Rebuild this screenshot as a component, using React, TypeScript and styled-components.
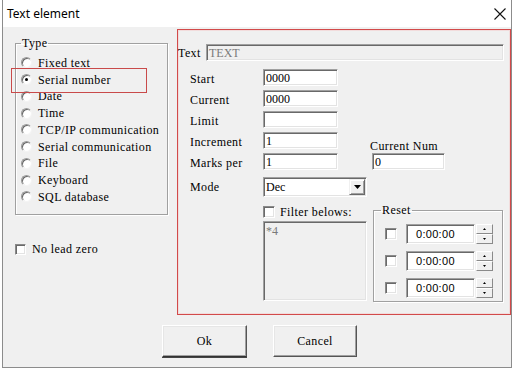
import React from "react"
import styled, { createGlobalStyle } from "styled-components"

const GlobalStyle = createGlobalStyle`
  html, body { margin: 0; padding: 0; background: #fff; }
  body { font-family: "Liberation Serif", serif; color: #000; }
  * { box-sizing: border-box; }
`

const dlgText = `
  font-family: "Liberation Serif", serif;
  font-size: 12px;
  letter-spacing: 0.4px;
  line-height: 12px;
  white-space: nowrap;
`

const Window = styled.div`
  box-sizing: content-box;
  margin-left: 2px;
  width: 508px;
  height: 367px;
  border: 1px solid #8c8c8c;
  border-top: none;
  background: #f0f0f0;
  display: flex;
  flex-direction: column;
`

const TitleBar = styled.div`
  height: 27px;
  flex: 0 0 27px;
  background: #fff;
  display: flex;
  align-items: center;
  justify-content: space-between;
  padding: 0 5px 0 4px;
`

const Title = styled.span`
  font-family: "Noto Sans", sans-serif;
  font-size: 12px;
  color: #000;
`

const Client = styled.div`
  flex: 1;
  display: flex;
  flex-direction: column;
  padding-top: 2px;
`

const MainRow = styled.div`
  display: flex;
  height: 286px;
`

const LeftCol = styled.div`
  width: 174px;
  padding: 8px 0 0 12px;
  display: flex;
  flex-direction: column;
`

const GroupBox = styled.fieldset<{ $w: number; $h: number; $pl: number }>`
  position: relative;
  margin: 0;
  width: ${(p) => p.$w}px;
  height: ${(p) => p.$h}px;
  min-width: 0;
  padding: 0 0 0 ${(p) => p.$pl}px;
  border: 1px solid #a0a0a0;
  box-shadow: inset 1px 1px 0 #fff, 1px 1px 0 #fff;
`

const Legend = styled.legend`
  ${dlgText}
  padding: 0 1px;
`

const RadioList = styled.div`
  padding-top: 5.6px;
  display: flex;
  flex-direction: column;
`

const RadioRow = styled.div`
  height: 16.75px;
  display: flex;
  align-items: center;
  gap: 6px;
`

const RadioCircle = styled.span<{ $checked?: boolean }>`
  position: relative;
  width: 11px;
  height: 11px;
  border-radius: 50%;
  background: #fff;
  border: 1px solid;
  border-color: #9a9a9a #f4f4f4 #f4f4f4 #9a9a9a;
  box-shadow: inset 1px 1px 0 #6a6a6a;
  flex: 0 0 11px;
  &::after {
    content: "";
    display: ${(p) => (p.$checked ? "block" : "none")};
    position: absolute;
    left: 3px;
    top: 3px;
    width: 3px;
    height: 3px;
    border-radius: 50%;
    background: #000;
  }
`

const Label = styled.span`
  ${dlgText}
`

const Mark = styled.div`
  position: absolute;
  left: -5px;
  top: 19px;
  width: 136px;
  height: 25px;
  border: 1px solid #c94a4a;
  pointer-events: none;
`

const CheckRow = styled.div<{ $gap: number }>`
  display: flex;
  align-items: center;
  gap: ${(p) => p.$gap}px;
`

const CheckBox = styled.span<{ $size?: number }>`
  width: ${(p) => p.$size ?? 12}px;
  height: ${(p) => p.$size ?? 12}px;
  flex: 0 0 auto;
  background: #fff;
  border: 1px solid;
  border-color: #8a8a8a #fff #fff #8a8a8a;
  box-shadow: inset 1px 1px 0 #6a6a6a, inset -1px -1px 0 #e3e3e3;
`

const NoLeadZero = styled(CheckRow)`
  margin-top: 28px;
`

const RightPanel = styled.div`
  width: 334px;
  height: 286px;
  border: 1px solid #d24a4a;
  box-shadow: inset 0 0 0 1px #f2dcdc;
  display: flex;
  flex-direction: column;
`

const TextRow = styled.div`
  margin-top: 14px;
  display: flex;
  align-items: center;
`

const TextLabel = styled(Label)`
  width: 28px;
`

const Field = styled.div<{ $w: number; $h?: number; $disabled?: boolean }>`
  width: ${(p) => p.$w}px;
  height: ${(p) => p.$h ?? 17}px;
  background: ${(p) => (p.$disabled ? "#f0f0f0" : "#fff")};
  color: ${(p) => (p.$disabled ? "#7a7a7a" : "#000")};
  border: 1px solid;
  border-color: #a0a0a0 #fff #fff #a0a0a0;
  box-shadow: inset 1px 1px 0 #696969, inset -1px -1px 0 #e3e3e3;
  font-family: "Liberation Serif", serif;
  font-size: 12px;
  line-height: 14px;
  padding: 1px 0 0 2px;
  overflow: hidden;
  white-space: nowrap;
`

const FormGrid = styled.div`
  margin: 8px 0 0 12px;
  display: grid;
  grid-template-columns: 73px 75px 34px 75px;
  grid-template-rows: repeat(5, 17px) 23px;
  row-gap: 4px;
  align-items: center;
`

const FormLabel = styled(Label)<{ $row: number }>`
  grid-column: 1;
  grid-row: ${(p) => p.$row};
  align-self: ${(p) => (p.$row === 6 ? "end" : "center")};
  padding-bottom: ${(p) => (p.$row === 6 ? 4 : 0)}px;
  margin-top: 2px;
`

const Cell = styled.div<{ $row: number; $col: number }>`
  grid-column: ${(p) => p.$col} / span ${(p) => (p.$col === 2 && p.$row === 6 ? 2 : 1)};
  grid-row: ${(p) => p.$row};
  align-self: ${(p) => (p.$row === 6 ? "end" : "center")};
`

const CurrentNumLabel = styled(Label)`
  grid-column: 4;
  grid-row: 4;
  align-self: end;
  margin: 0 0 -3px -2px;
`

const Combo = styled(Field)`
  position: relative;
  padding-top: 2px;
`

const DropButton = styled.span`
  position: absolute;
  right: 1px;
  top: 1px;
  width: 16px;
  height: 16px;
  background: #f0f0f0;
  border: 1px solid;
  border-color: #f0f0f0 #696969 #696969 #f0f0f0;
  box-shadow: inset 1px 1px 0 #fff, inset -1px -1px 0 #a0a0a0;
  display: flex;
  align-items: center;
  justify-content: center;
`

const FilterRow = styled.div`
  margin: 9px 0 0 85px;
  display: flex;
  align-items: flex-start;
`

const FilterCol = styled.div`
  width: 104px;
  display: flex;
  flex-direction: column;
  gap: 3px;
`

const FilterArea = styled(Field)`
  padding-top: 2px;
`

const ResetBox = styled(GroupBox)`
  margin: -2px 0 0 6px;
`

const ResetRows = styled.div`
  padding: 8px 0 0 4px;
  display: flex;
  flex-direction: column;
  gap: 7px;
`

const ResetRow = styled.div`
  display: flex;
  align-items: center;
  height: 20px;
`

const TimeField = styled(Field)`
  margin-left: 9px;
  font-family: "Liberation Sans", sans-serif;
  font-size: 11px;
  line-height: 16px;
  padding: 1px 0 0 9px;
  letter-spacing: 0.3px;
`

const Spin = styled.div`
  margin-left: 1px;
  width: 17px;
  height: 20px;
  display: flex;
  flex-direction: column;
`

const SpinHalf = styled.span`
  flex: 1;
  background: #f0f0f0;
  border: 1px solid;
  border-color: #fff #8a8a8a #8a8a8a #fff;
  display: flex;
  align-items: center;
  justify-content: center;
`

const ButtonRow = styled.div`
  margin-top: 10px;
  padding-left: 159px;
  display: flex;
  gap: 26px;
`

const Button = styled.button<{ $w: number; $default?: boolean }>`
  ${dlgText}
  width: ${(p) => p.$w}px;
  height: 32px;
  padding: 0;
  background: #f0f0f0;
  color: #000;
  border: 1px solid;
  border-color: #fff #555 ${(p) => (p.$default ? "#333" : "#555")} #fff;
  box-shadow: inset -1px -1px 0 #a0a0a0, inset 1px 1px 0 #e6e6e6
    ${(p) => (p.$default ? ", 0 1px 0 #444" : "")};
`

const Triangle = ({ down, size }: { down?: boolean; size: number }) => (
  <svg width={size} height={Math.ceil(size / 2)} viewBox={`0 0 ${size} ${Math.ceil(size / 2)}`}>
    <polygon
      points={
        down
          ? `0,0 ${size},0 ${size / 2},${Math.ceil(size / 2)}`
          : `0,${Math.ceil(size / 2)} ${size},${Math.ceil(size / 2)} ${size / 2},0`
      }
      fill="#000"
    />
  </svg>
)

const CloseIcon = () => (
  <svg width="12" height="12" viewBox="0 0 12 12">
    <path d="M0.5 0.5 L11.5 11.5 M11.5 0.5 L0.5 11.5" stroke="#111" strokeWidth="1.1" />
  </svg>
)

const types = [
  "Fixed text",
  "Serial number",
  "Date",
  "Time",
  "TCP/IP communication",
  "Serial communication",
  "File",
  "Keyboard",
  "SQL database",
]

const formRows = [
  { label: "Start", value: "0000" },
  { label: "Current", value: "0000" },
  { label: "Limit", value: "" },
  { label: "Increment", value: "1" },
  { label: "Marks per", value: "1" },
]

export default function App() {
  return (
    <>
      <GlobalStyle />
      <Window>
        <TitleBar>
          <Title>Text element</Title>
          <CloseIcon />
        </TitleBar>
        <Client>
          <MainRow>
            <LeftCol>
              <GroupBox $w={153} $h={178} $pl={5}>
                <Legend>Type</Legend>
                <RadioList>
                  {types.map((t, i) => (
                    <RadioRow key={t}>
                      <RadioCircle $checked={i === 1} />
                      <Label>{t}</Label>
                    </RadioRow>
                  ))}
                </RadioList>
                <Mark />
              </GroupBox>
              <NoLeadZero $gap={6}>
                <CheckBox $size={11} />
                <Label>No lead zero</Label>
              </NoLeadZero>
            </LeftCol>
            <RightPanel>
              <TextRow>
                <TextLabel>Text</TextLabel>
                <Field $w={298} $disabled>
                  TEXT
                </Field>
              </TextRow>
              <FormGrid>
                {formRows.map((r, i) => (
                  <React.Fragment key={r.label}>
                    <FormLabel $row={i + 1}>{r.label}</FormLabel>
                    <Cell $row={i + 1} $col={2}>
                      <Field $w={75}>{r.value}</Field>
                    </Cell>
                  </React.Fragment>
                ))}
                <CurrentNumLabel>Current Num</CurrentNumLabel>
                <Cell $row={5} $col={4}>
                  <Field $w={73}>0</Field>
                </Cell>
                <FormLabel $row={6}>Mode</FormLabel>
                <Cell $row={6} $col={2}>
                  <Combo $w={104} $h={20}>
                    Dec
                    <DropButton>
                      <Triangle down size={7} />
                    </DropButton>
                  </Combo>
                </Cell>
              </FormGrid>
              <FilterRow>
                <FilterCol>
                  <CheckRow $gap={5}>
                    <CheckBox />
                    <Label>Filter belows:</Label>
                  </CheckRow>
                  <FilterArea $w={104} $h={80} $disabled>
                    *4
                  </FilterArea>
                </FilterCol>
                <ResetBox $w={130} $h={98} $pl={7}>
                  <Legend>Reset</Legend>
                  <ResetRows>
                    {[0, 1, 2].map((n) => (
                      <ResetRow key={n}>
                        <CheckBox />
                        <TimeField $w={69} $h={20}>
                          0:00:00
                        </TimeField>
                        <Spin>
                          <SpinHalf>
                            <Triangle size={3} />
                          </SpinHalf>
                          <SpinHalf>
                            <Triangle down size={3} />
                          </SpinHalf>
                        </Spin>
                      </ResetRow>
                    ))}
                  </ResetRows>
                </ResetBox>
              </FilterRow>
            </RightPanel>
          </MainRow>
          <ButtonRow>
            <Button $w={85} $default>
              Ok
            </Button>
            <Button $w={84}>Cancel</Button>
          </ButtonRow>
        </Client>
      </Window>
    </>
  )
}
